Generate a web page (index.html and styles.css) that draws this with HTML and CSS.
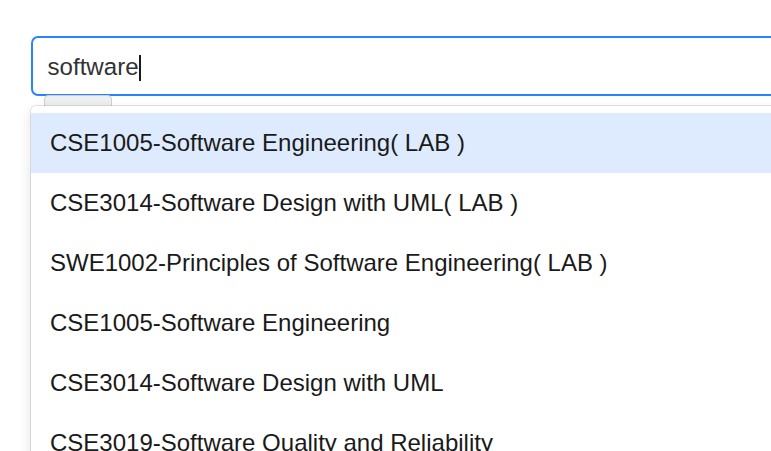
FILE: index.html
```html
<!DOCTYPE html>
<html lang="en">
<head>
<meta charset="utf-8">
<title>Course search</title>
<link rel="stylesheet" href="styles.css">
</head>
<body>
<div class="select">
  <div class="control">
    <span class="value">software</span><span class="caret"></span>
  </div>
  <div class="tab"></div>
  <div class="menu">
    <div class="option focused">CSE1005-Software Engineering( LAB )</div>
    <div class="option">CSE3014-Software Design with UML( LAB )</div>
    <div class="option">SWE1002-Principles of Software Engineering( LAB )</div>
    <div class="option">CSE1005-Software Engineering</div>
    <div class="option">CSE3014-Software Design with UML</div>
    <div class="option">CSE3019-Software Quality and Reliability</div>
  </div>
</div>
</body>
</html>
```
FILE: styles.css
```css
html, body {
  margin: 0;
  padding: 0;
  background: #ffffff;
  overflow: hidden;
  height: 451px;
}

body {
  font-family: "Liberation Sans", Arial, sans-serif;
}

.select {
  position: relative;
  padding: 36px 0 0 31px;
  width: 960px;
}

.control {
  box-sizing: border-box;
  height: 60px;
  border: 2.6px solid #2684ff;
  border-radius: 7px;
  display: flex;
  align-items: center;
  padding-left: 14.5px;
  background: #fff;
}

.value {
  font-size: 24.1px;
  color: #333333;
  line-height: 1;
  margin-top: 2px;
}

.caret {
  display: inline-block;
  width: 2px;
  height: 26px;
  background: #1a1a1a;
  margin-left: 0;
  margin-top: 4px;
}

.tab {
  position: absolute;
  left: 44px;
  top: 95px;
  width: 66px;
  height: 14px;
  background: #efefef;
  border: 1px solid #cfcfcf;
  border-radius: 4px 4px 0 0;
}

.menu {
  position: relative;
  margin-top: 10px;
  background: #fff;
  border-radius: 5px;
  padding-top: 7px;
  box-shadow: 0 0 0 1px rgba(0, 0, 0, 0.1), 0 5px 14px rgba(0, 0, 0, 0.12);
}

.option {
  height: 60px;
  display: flex;
  align-items: center;
  padding-left: 19px;
  font-size: 24px;
  color: #1a1a1a;
  white-space: nowrap;
}

.option.focused {
  background: #deebff;
}
```
